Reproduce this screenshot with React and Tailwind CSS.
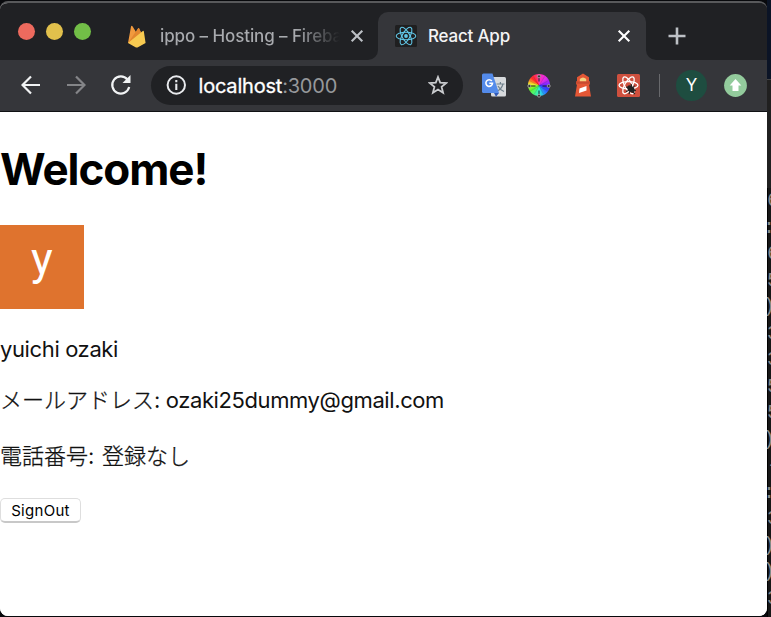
import React from 'react';

const sans = "font-['Inter','Noto_Sans_CJK_JP',sans-serif]";

function Firebase() {
  return (
    <svg width="20" height="24" viewBox="0 0 20 24" className="shrink-0">
      <path d="M1 19 4 2.500Q4.500 1 5.500 2.300L9 8 11 4.500Q11.700 3.500 12.300 4.800L17 18Z" fill="#f19a3e" />
      <path d="M1 19 11 4.500Q11.700 3.500 12.300 4.800L15 10Z" fill="#e2872f" />
      <path d="M1 19 15.500 7.200Q16.600 6.300 16.900 7.700L18.600 19 10.500 23.400Q9.500 23.800 8.500 23.300Z" fill="#f7ca51" />
    </svg>
  );
}

function ReactLogo() {
  return (
    <svg width="22" height="22" viewBox="-11 -11 22 22" className="shrink-0">
      <rect x="-11" y="-11" width="22" height="22" rx="1.500" fill="#1f1f20" />
      <circle r="1.900" fill="#61c7e8" />
      <g fill="none" stroke="#61c7e8" strokeWidth="1.100">
        <ellipse rx="9.800" ry="3.800" />
        <ellipse rx="9.800" ry="3.800" transform="rotate(60)" />
        <ellipse rx="9.800" ry="3.800" transform="rotate(120)" />
      </g>
    </svg>
  );
}

function Close({ color }) {
  return (
    <svg width="14" height="14" viewBox="0 0 14 14" className="shrink-0">
      <path d="m1.700 1.700 10.600 10.600M12.300 1.700 1.700 12.300" stroke={color} strokeWidth="2.100" />
    </svg>
  );
}

function Translate() {
  return (
    <svg width="24" height="24" viewBox="0 0 24 24" className="shrink-0">
      <rect x="9" y="4" width="15" height="19.500" rx="1.500" fill="#d7dadd" />
      <path d="M14.500 11H22.500M18.400 9V11M21 11Q19.500 16 15.500 18M16 13Q18 17 22 18.500" fill="none" stroke="#71828d" strokeWidth="1.200" />
      <path d="M12 20H17L14 23.800Z" fill="#3159b5" />
      <path d="M1.500.500H10.500L17 20H1.500Q0 20 0 18.500V2Q0 .500 1.500.500Z" fill="#548bea" />
      <path d="M9.800 8A3.300 3.300 0 1 0 10.500 10.200H7.300" fill="none" stroke="#fff" strokeWidth="1.600" />
    </svg>
  );
}

function ColorWheel() {
  return (
    <div className="relative size-[24px] shrink-0">
      <div className="m-px size-[22px] rounded-full bg-[conic-gradient(#ff30b0,#e32be8_45deg,#8a28ff_80deg,#3a28ff_105deg,#2b7bff_140deg,#28eee0_175deg,#43f58b_205deg,#65f52f_240deg,#e8f02d_275deg,#ff9929_292deg,#ff2929_315deg,#ff304d_335deg,#ff30b0)]" />
      <svg width="24" height="24" viewBox="0 0 24 24" className="absolute inset-0">
        <path d="M12 3V7.500M12 16.500V21M3 12H8.500M15.500 12H21" stroke="#222" strokeWidth="1" />
        <path d="M6.500 2.500 17.500 21.500M17.500 2.500 6.500 21.500M2.500 6.500 21.500 17.500M21.500 6.500 2.500 17.500" stroke="#222" strokeOpacity=".3" strokeWidth=".5" />
        <g fill="#333" stroke="#b9b9b9" strokeWidth=".7">
          <circle cx="12" cy="2.300" r="1.500" /><circle cx="12" cy="21.700" r="1.500" />
          <circle cx="2.300" cy="12" r="1.500" /><circle cx="21.700" cy="12" r="1.500" />
        </g>
      </svg>
    </div>
  );
}

function Lighthouse() {
  return (
    <svg width="18" height="24" viewBox="0 0 18 24" className="shrink-0">
      <path d="M9 .500 15 4.200V8.500H16V11.500H15L17 23.500H1L3 11.500H2V8.500H3V4.200Z" fill="#e45735" />
      <path d="M5.800 8.500V6Q9 2.800 12.200 6V8.500Z" fill="#f4d481" />
      <path d="M2 8.500H16V10.800H2Z" fill="#c74b31" />
      <path d="M5.500 15.500 12.500 13V17.500L5 20Z" fill="#fff" />
    </svg>
  );
}

function DevTools() {
  return (
    <svg width="23" height="23" viewBox="0 0 23 23" className="shrink-0">
      <rect width="23" height="23" rx="1.500" fill="#cf503e" />
      <g fill="none" stroke="#fff" strokeWidth="1.300" transform="translate(11.500 11.300)">
        <ellipse rx="9.500" ry="3.700" />
        <ellipse rx="9.500" ry="3.700" transform="rotate(60)" />
        <ellipse rx="9.500" ry="3.700" transform="rotate(120)" />
      </g>
      <ellipse cx="14" cy="15" rx="4.400" ry="2.700" transform="rotate(40 14 15)" fill="#222" />
      <path d="m9 13 4 1M9 17.500l4-1.500M12 20l1-3M14 10l1 4M17.500 11.500l-2 3M16 16l3 .500M15 17l3 3" stroke="#222" strokeWidth="1.200" />
    </svg>
  );
}

function TabStrip() {
  return (
    <div className="flex h-[57px] shrink-0 bg-[#202124]">
      <div className="flex w-[368px] shrink-0 items-start pl-[18px]">
        <div className="mt-[20px] flex gap-[11px]">
          <span className="size-[17px] rounded-full bg-[#ed6a5e]" />
          <span className="size-[17px] rounded-full bg-[#e1c04c]" />
          <span className="size-[17px] rounded-full bg-[#72be47]" />
        </div>
        <div className="ml-[36px] mt-[21px] flex items-center">
          <Firebase />
          <span className="ml-[13px] w-[180px] overflow-hidden whitespace-nowrap bg-gradient-to-r from-[#a9abaf] from-75% to-transparent to-100% bg-clip-text text-[17px] font-medium leading-6 tracking-[-0.1px] text-transparent">ippo – Hosting – Fireba</span>
          <span className="ml-[10px]"><Close color="#bdc1c6" /></span>
        </div>
      </div>
      <div className="flex w-[10px] shrink-0 items-end bg-[#35363a]">
        <div className="h-full w-full rounded-br-[10px] bg-[#202124]" />
      </div>
      <div className="flex flex-1">
        <div className="flex w-[268px] bg-[#202124] pt-[9px]">
          <div className="flex w-full items-center rounded-t-[10px] bg-[#35363a] pl-[17px] pr-[15px]">
            <ReactLogo />
            <span className="ml-[11px] flex-1 whitespace-nowrap text-[17px] font-medium leading-6 tracking-[-0.2px] text-[#f4f4f5]">React App</span>
            <Close color="#fff" />
          </div>
        </div>
        <div className="flex-1 bg-[#35363a]">
          <div className="h-full rounded-bl-[10px] bg-[#202124] pl-[22px] pt-[24px]">
            <svg width="18" height="18" viewBox="0 0 18 18">
              <path d="M9 .500V17.500M.500 9H17.500" stroke="#bdc1c6" strokeWidth="2.600" />
            </svg>
          </div>
        </div>
      </div>
    </div>
  );
}

function Toolbar() {
  return (
    <div className="flex h-[51px] shrink-0 items-center bg-[#35363a] pb-px pl-[21px]">
      <svg width="20" height="20" viewBox="0 0 20 20" className="shrink-0" fill="none" stroke="#f1f3f4" strokeWidth="2.200">
        <path d="M19 10H2M10 1.500 1.500 10 10 18.500" />
      </svg>
      <svg width="20" height="20" viewBox="0 0 20 20" className="ml-[25px] shrink-0" fill="none" stroke="#848588" strokeWidth="2.200">
        <path d="M1 10H18M10 1.500 18.500 10 10 18.500" />
      </svg>
      <svg width="22" height="22" viewBox="0 0 22 22" className="ml-[24px] shrink-0">
        <path d="M17.500 5.500A8.600 8.600 0 1 0 19.200 13" fill="none" stroke="#f1f3f4" strokeWidth="2.200" />
        <path d="M20.500 1V9H12.500Z" fill="#f1f3f4" />
      </svg>
      <div className="ml-[19px] flex h-[39px] w-[312px] shrink-0 items-center rounded-full bg-[#202124] pl-[15px] pr-[15px]">
        <svg width="20" height="20" viewBox="0 0 20 20" className="shrink-0">
          <circle cx="10.300" cy="10" r="8.700" fill="none" stroke="#e8eaed" strokeWidth="2" />
          <path d="M10.300 8.800V15M10.300 5V7.200" stroke="#e8eaed" strokeWidth="2.100" />
        </svg>
        <span className="ml-[12.500px] flex-1 pt-px text-[20px] leading-6 tracking-[-0.2px] text-[#96989b]"><span className="text-white [-webkit-text-stroke:0.3px_#fff]">localhost</span>:3000</span>
        <svg width="20" height="20" viewBox="0 0 20 20" className="shrink-0">
          <path d="m10 2 2.200 5.600 6.100.400-4.700 3.900 1.500 5.900-5.100-3.300-5.100 3.300 1.500-5.900L1.700 8l6.100-.400Z" fill="none" stroke="#c9cbce" strokeWidth="1.800" />
        </svg>
      </div>
      <div className="ml-[19px] flex items-center">
        <Translate />
        <span className="ml-[21px]"><ColorWheel /></span>
        <span className="ml-[23px]"><Lighthouse /></span>
        <span className="ml-[25px]"><DevTools /></span>
        <span className="ml-[19px] h-[23px] w-px bg-[#68696c]" />
        <span className="ml-[16px] flex size-[31px] items-center justify-center rounded-full bg-[#1e4d40] pt-px text-[17px] text-white">Y</span>
        <svg width="23" height="23" viewBox="0 0 23 23" className="ml-[17px] shrink-0">
          <circle cx="11.500" cy="11.500" r="11.400" fill="#93cb9c" />
          <path d="M11.500 5 17.300 11.500H14.500V17H8.500V11.500H5.700Z" fill="#fff" />
        </svg>
      </div>
    </div>
  );
}

const behind = ['6', ':', '6', '5', ')', '3', '3', '5', '5', ')', '-', ':', '3', ')', ')', '3'];

export default function App() {
  return (
    <div className={`flex h-[617px] w-[771px] overflow-hidden bg-[#08090c] ${sans}`}>
      <div className="flex w-[767px] shrink-0 flex-col pb-[1px] pt-[1px]">
        <div className="flex h-full flex-col overflow-hidden rounded-[8px] border-t-2 border-[#58595b] bg-white">
          <TabStrip />
          <Toolbar />
          <div className="h-px shrink-0 bg-[#101114]" />
          <main className="flex-1 bg-white text-[#111]">
            <h1 className="pt-[30px] text-[44px] font-bold leading-[54px] tracking-[-1.050px] text-black">Welcome!</h1>
            <div className="mt-[29px] flex size-[84px] justify-center bg-[#df732e] pt-[4px] font-['Roboto',sans-serif] text-[46px] leading-[60px] text-white">y</div>
            <p className="mt-[26px] text-[22px] leading-[28px] tracking-[-0.38px]">yuichi ozaki</p>
            <p className="mt-[21px] whitespace-nowrap text-[22px] leading-[32px]"><span className="font-light [-webkit-text-stroke:0.3px_#111]">メールアドレス</span><span className="tracking-[-0.4px]">: ozaki25dummy@gmail.com</span></p>
            <p className="mt-[24px] whitespace-nowrap text-[22px] leading-[32px]"><span className="font-light [-webkit-text-stroke:0.3px_#111]">電話番号</span><span className="tracking-[0.7px]">: </span><span className="font-light [-webkit-text-stroke:0.3px_#111]">登録なし</span></p>
            <button className="mt-[26px] flex h-[25px] w-[81px] items-center justify-center rounded-[5px] border border-b-2 border-[#dedede] border-b-[#c8c8c8] bg-white pt-[2px] text-[15px] leading-5 tracking-[0.3px] text-black">SignOut</button>
          </main>
        </div>
      </div>
      <div className="flex w-[4px] shrink-0 flex-col overflow-hidden">
        <div className="h-[79px] bg-[#0b1426]" />
        <div className="h-[109px] border-t border-[#444] bg-[#202020]" />
        <div className="flex-1 border-l border-black bg-[#171717] font-['Liberation_Mono',monospace] text-[20px] leading-[26.5px] text-[#8a8a8a]">
          {behind.map((c, i) => <div key={i} className={c === ')' || c === ':' ? '-ml-[5px]' : '-ml-px'}>{c}</div>)}
        </div>
      </div>
    </div>
  );
}
